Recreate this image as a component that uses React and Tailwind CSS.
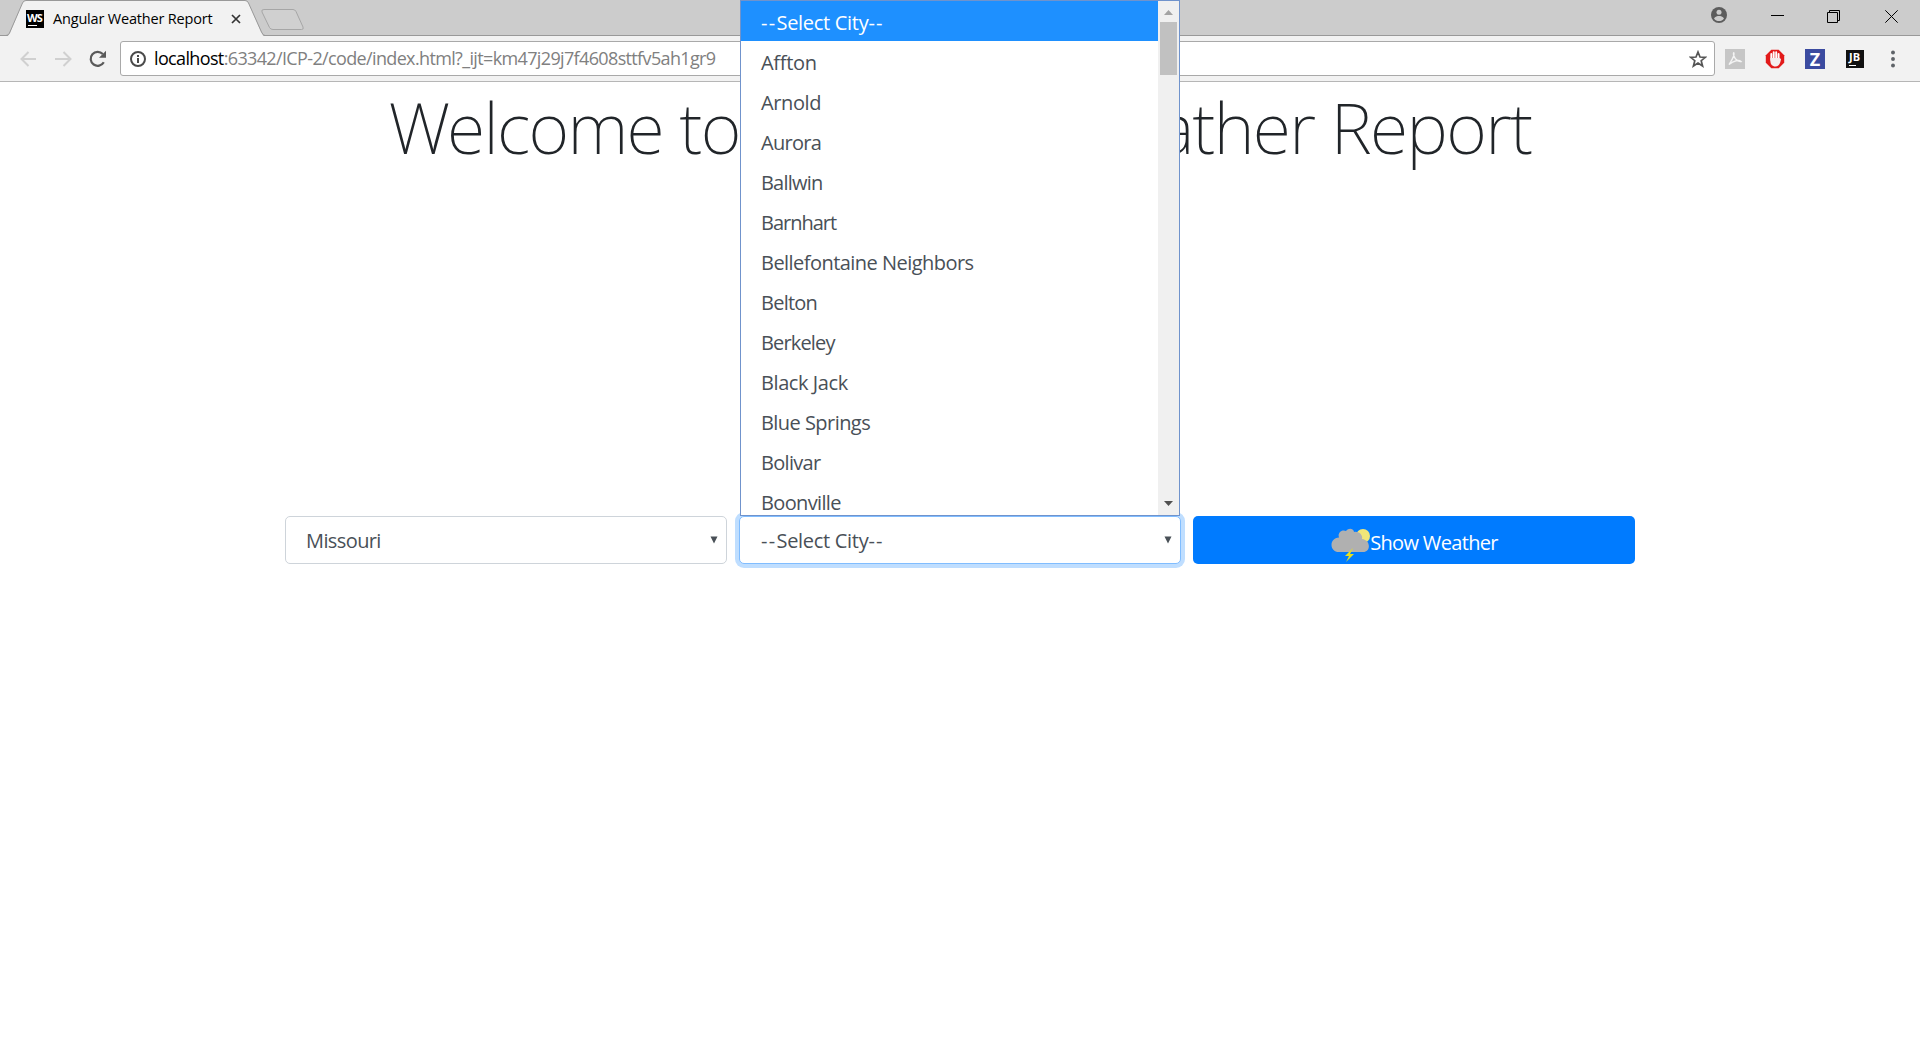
const cities = [
  ["Affton", "tracking-[-0.3px]"],
  ["Arnold", "tracking-[-0.4px]"],
  ["Aurora", "tracking-[-0.7px]"],
  ["Ballwin", "tracking-[-0.8px]"],
  ["Barnhart", "tracking-[-1px]"],
  ["Bellefontaine Neighbors", "tracking-[-0.54px]"],
  ["Belton", "tracking-[-0.75px]"],
  ["Berkeley", "tracking-[-0.85px]"],
  ["Black Jack", "tracking-[-0.42px]"],
  ["Blue Springs", "tracking-[-0.55px]"],
  ["Bolivar", "tracking-[-0.7px]"],
  ["Boonville", "tracking-[-0.64px]"],
];

function TabStrip() {
  return (
    <div className="relative flex h-9 items-start border-b border-[#999999] bg-[#cccccc]">
      <svg className="absolute left-0 top-0" width="310" height="36" fill="none">
        <path d="M7.5 36 L8 35.5 C9 35 9.5 34 10 33 L22.5 3 Q23.5 .5 26 .5 H245 Q247.500 .5 248.500 3 L261 32 Q262.500 35.500 264 36 Z" fill="#f2f2f2" />
        <path d="M0 35.500 H6 Q8.500 35.500 9.500 33 L22.500 3 Q23.500 .5 26 .5 H245 Q247.500 .5 248.500 3 L261.500 32 Q263 35.500 265 35.500" stroke="#999" />
        <path d="M264 9.500 H293 Q295 9.500 296 11.500 L303 27 Q304 29.500 301.500 29.500 H273 Q270.500 29.500 269.500 27.500 L262 12 Q261 9.500 264 9.500Z" fill="#d0d0d0" stroke="#a6a6a6" />
      </svg>
      <div className="relative ml-[26px] flex h-9 w-[218px] items-center pt-0.5">
        <span className="relative h-[18px] w-[18px] bg-black">
          <span className="absolute left-px top-0.5 text-[11px] font-bold leading-[12px] tracking-[-0.8px] text-white">WS</span>
          <span className="absolute bottom-[2px] left-[2px] h-px w-[9px] bg-white" />
        </span>
        <span className="ml-[9px] whitespace-nowrap text-[14.500px] tracking-[-0.18px] text-black">Angular Weather Report</span>
      </div>
      <svg className="absolute left-[231px] top-[14px]" width="10" height="10" stroke="#333" strokeWidth="1.700">
        <path d="M1 1 L9 9 M9 1 L1 9" />
      </svg>
      <div className="ml-auto flex h-[30px] items-center pr-[22px]">
        <svg width="16" height="16" viewBox="0 0 16 16" className="mr-[44px]">
          <circle cx="8" cy="8" r="8" fill="#5c5c5c" />
          <circle cx="8" cy="5.200" r="2.500" fill="#ccc" />
          <path d="M3 11.400 C4 9.300 6.500 8.900 8 8.900 C9.500 8.900 12 9.300 13 11.400 C11.700 13.200 10 14 8 14 C6 14 4.300 13.200 3 11.400Z" fill="#ccc" />
        </svg>
        <svg width="13" height="13" className="mr-[43px]" stroke="#000"><path d="M0 6.500 H13" /></svg>
        <svg width="13" height="13" className="mr-[45px] mt-0.5" fill="none" stroke="#000">
          <path d="M.5 2.500 H10.500 V12.500 H.5Z M2.500 2.500 V.5 H12.500 V10.500 H10.500" />
        </svg>
        <svg width="13" height="13" className="mt-0.5" stroke="#000"><path d="M.3 .3 L12.700 12.700 M12.700 .3 L.3 12.700" /></svg>
      </div>
    </div>
  );
}

function Toolbar() {
  return (
    <div className="flex h-[46px] items-center border-b border-[#b6b6b6] bg-[#f2f2f2]">
      <svg width="17" height="16" className="ml-5" fill="none" stroke="#d0d0d0" strokeWidth="2">
        <path d="M16 8 H2 M8.500 1 L1.500 8 L8.500 15" />
      </svg>
      <svg width="17" height="16" className="ml-[18px]" fill="none" stroke="#d0d0d0" strokeWidth="2">
        <path d="M0 8 H15 M8.500 1 L15.500 8 L8.500 15" />
      </svg>
      <svg width="18" height="18" className="ml-[17px]" fill="none" stroke="#5a5a5a" strokeWidth="2.200">
        <path d="M14.800 12.200 A7 7 0 1 1 13.800 4" />
        <path d="M17 .8 V7.800 H10Z" fill="#5a5a5a" stroke="none" />
      </svg>
      <div className="ml-[13px] flex h-[35px] w-[1595px] items-center rounded-[3px] border border-[#a9a9a9] bg-white">
        <svg width="16" height="16" className="ml-[9px]" fill="none" stroke="#4a4a4a" strokeWidth="2">
          <circle cx="8" cy="8" r="7" />
          <path d="M8 7 V12 M8 4 V6" />
        </svg>
        <span className="ml-2 whitespace-nowrap text-[18px] tracking-[-0.64px] text-[#808080]">
          <span className="text-black">localhost</span>:63342/ICP-2/code/index.html?_ijt=km47j29j7f4608sttfv5ah1gr9
        </span>
        <svg width="18" height="18" viewBox="0 0 18 18" className="ml-auto mr-[7px]" fill="none" stroke="#555" strokeWidth="1.700">
          <path d="M9 2 L11 7 L16.300 7.300 L12.200 10.700 L13.600 16 L9 13 L4.400 16 L5.800 10.700 L1.700 7.300 L7 7Z" />
        </svg>
      </div>
      <svg width="20" height="20" className="ml-[10px]" fill="none">
        <path d="M0 0 H20 V20 H0Z" fill="#c6c6c6" />
        <path d="M4 15.500 C6 12 9.500 8 9 4 C8.500 3 8 5 9 7 C10 10 13 13 16 12.500 C14 10.500 9 11.500 4 15.500Z" stroke="#f4f4f4" strokeWidth="1.300" />
      </svg>
      <svg width="20" height="20" viewBox="0 0 20 20" className="ml-5">
        <path d="M6.300 .8 H13.700 L19.200 6.300 V13.700 L13.700 19.200 H6.300 L.8 13.700 V6.300Z" fill="#e21a1a" />
        <path d="M6.300 11 V5 M8.700 10 V3.200 M11.200 10 V3.200 M13.600 11 V5" stroke="#fff" strokeWidth="1.900" strokeLinecap="round" />
        <path d="M5.400 9 H14.500 L16 10 C15.500 14 14 17.500 10.500 17.500 C7 17.500 5.400 15 5.400 12Z" fill="#f4eeee" />
      </svg>
      <span className="ml-5 flex h-5 w-5 items-center justify-center bg-[#3b4ba0] text-[18px] font-bold leading-none text-white">Z</span>
      <span className="relative ml-[21px] h-[18px] w-[18px] bg-[#111]">
        <span className="absolute left-[3px] top-px text-[11px] font-bold leading-[12px] text-white">JB</span>
        <span className="absolute bottom-[2px] left-[3px] h-px w-[7px] bg-white" />
      </span>
      <svg width="4" height="18" className="ml-[27px]" fill="#5f6368">
        <circle cx="2" cy="2.500" r="1.950" /><circle cx="2" cy="9" r="1.950" /><circle cx="2" cy="15.500" r="1.950" />
      </svg>
    </div>
  );
}

function Placeholder() {
  return (
    <span className="whitespace-nowrap tracking-[-0.3px]">
      <span className="tracking-[1.3px]">--</span>Select City<span className="tracking-[1.3px]">--</span>
    </span>
  );
}

function SelectBox({ children, focused }) {
  return (
    <div
      className={
        focused
          ? "flex h-12 items-center rounded-[5px] border border-[#80bdff] bg-white pl-[21px] pr-2 ring-4 ring-[#bfdeff]"
          : "flex h-12 items-center rounded-[5px] border border-[#ced4da] bg-white pl-5 pr-2"
      }
    >
      <span className="mt-0.5 tracking-[-0.6px]">{children}</span>
      <svg width="8" height="8" className="ml-auto" fill="#495057"><path d="M.5 .5 H7.500 L4 7.500Z" /></svg>
    </div>
  );
}

function CityMenu() {
  return (
    <div className="absolute left-[740px] top-0 flex h-[516px] w-[440px] overflow-hidden border border-[#7093cc] bg-white text-[20px] text-[#495057]">
      <ul className="flex-1">
        <li className="flex h-10 items-center bg-[#1e90ff] pl-5 pt-1 text-white"><Placeholder /></li>
        {cities.map(([name, tracking]) => (
          <li key={name} className="flex h-10 items-center pl-5 pt-1">
            <span className={tracking}>{name}</span>
          </li>
        ))}
      </ul>
      <div className="flex w-[21px] flex-col items-center bg-[#f0f0f0]">
        <svg width="9" height="5" className="mt-[9px]" fill="#a3a3a3"><path d="M0 5 L4.500 0 L9 5Z" /></svg>
        <div className="mt-[7px] h-[53px] w-[17px] bg-[#c1c1c1]" />
        <svg width="9" height="5" className="mb-[9px] mt-auto" fill="#505050"><path d="M0 0 L4.500 5 L9 0Z" /></svg>
      </div>
    </div>
  );
}

export default function App() {
  return (
    <div className="relative h-[1041px] w-[1920px] overflow-hidden bg-white font-['Open_Sans',sans-serif]">
      <TabStrip />
      <Toolbar />
      <h1 className="mx-auto flex h-[86px] w-[1143px] items-center justify-between whitespace-nowrap pt-1 font-['Noto_Sans',sans-serif] text-[70px] font-extralight leading-none tracking-[-1.7px] text-[#212529]">
        <span>Welcome to</span>
        <span>ather Report</span>
      </h1>
      <div className="mx-auto mt-[348px] grid w-[1350px] grid-cols-3 gap-x-3 text-[20px] text-[#495057]">
        <SelectBox>Missouri</SelectBox>
        <SelectBox focused><Placeholder /></SelectBox>
        <button className="flex h-12 items-center justify-center rounded-[5px] bg-[#007bff] text-white">
          <svg width="40" height="34" viewBox="0 0 40 34" className="mt-[10px]">
            <circle cx="33" cy="8" r="7" fill="#f0e678" />
            <path d="M9 24 C-1 24 -1 10 9 9.500 C7 4 13 1 16 3 C19 -1 24 1 24 4 C29 3 33 7 32 11 C41 12 41 24 33 24Z" fill="#b0b0b0" />
            <path d="M23 20 L15 28 H19 L16 34 L24 26 H20Z" fill="#e6e020" />
          </svg>
          <span className="mt-1.5 tracking-[-0.66px]">Show Weather</span>
        </button>
      </div>
      <CityMenu />
    </div>
  );
}
